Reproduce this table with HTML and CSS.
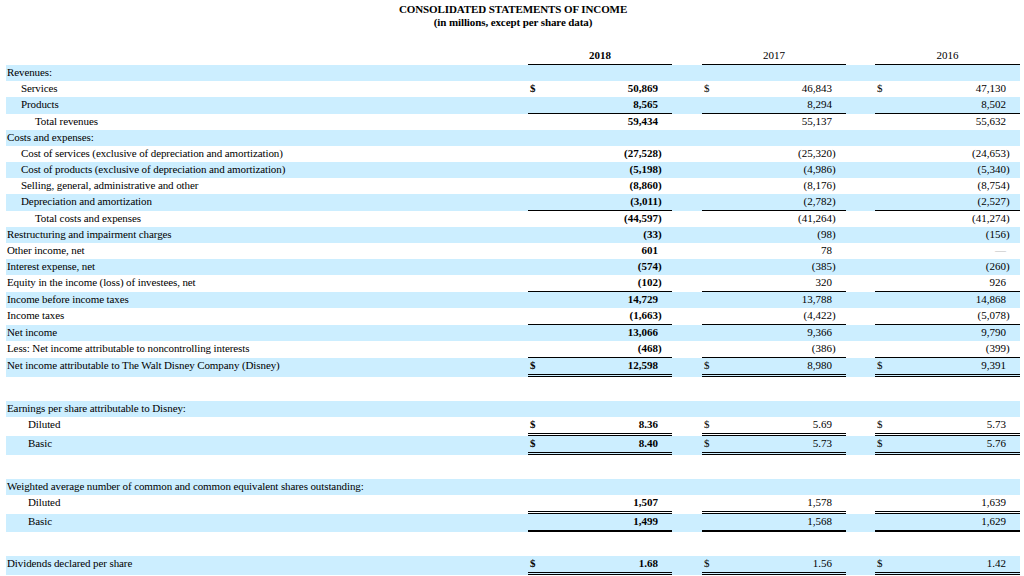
FILE: index.html
```html
<!DOCTYPE html>
<html lang="en">
<head>
<meta charset="utf-8">
<title>Consolidated Statements of Income</title>
<link rel="stylesheet" href="styles.css">
</head>
<body>
<div class="page">
  <div class="title">CONSOLIDATED STATEMENTS OF INCOME</div>
  <div class="subtitle">(in millions, except per share data)</div>
  <table class="fin">
    <colgroup>
      <col class="w-label">
      <col class="w-d"><col class="w-n"><col class="w-p">
      <col class="w-g1">
      <col class="w-d"><col class="w-n"><col class="w-p">
      <col class="w-g2">
      <col class="w-d"><col class="w-n3"><col class="w-p">
    </colgroup>
    <thead>
      <tr class="head">
        <th class="l"></th>
        <th colspan="3" class="yr bold">2018</th>
        <th class="g"></th>
        <th colspan="3" class="yr">2017</th>
        <th class="g"></th>
        <th colspan="3" class="yr">2016</th>
      </tr>
    </thead>
    <tbody>
      <tr class="b"><td class="l">Revenues:</td><td class="d"></td><td class="n"></td><td class="p"></td><td class="g"></td><td class="d"></td><td class="n"></td><td class="p"></td><td class="g"></td><td class="d"></td><td class="n"></td><td class="p"></td></tr>
      <tr><td class="l i1">Services</td><td class="d bold">$</td><td class="n bold">50,869</td><td class="p"></td><td class="g"></td><td class="d">$</td><td class="n">46,843</td><td class="p"></td><td class="g"></td><td class="d">$</td><td class="n">47,130</td><td class="p"></td></tr>
      <tr class="b ul"><td class="l i1">Products</td><td class="d"></td><td class="n bold">8,565</td><td class="p"></td><td class="g"></td><td class="d"></td><td class="n">8,294</td><td class="p"></td><td class="g"></td><td class="d"></td><td class="n">8,502</td><td class="p"></td></tr>
      <tr><td class="l i2">Total revenues</td><td class="d"></td><td class="n bold">59,434</td><td class="p"></td><td class="g"></td><td class="d"></td><td class="n">55,137</td><td class="p"></td><td class="g"></td><td class="d"></td><td class="n">55,632</td><td class="p"></td></tr>
      <tr class="b"><td class="l">Costs and expenses:</td><td class="d"></td><td class="n"></td><td class="p"></td><td class="g"></td><td class="d"></td><td class="n"></td><td class="p"></td><td class="g"></td><td class="d"></td><td class="n"></td><td class="p"></td></tr>
      <tr><td class="l i1">Cost of services (exclusive of depreciation and amortization)</td><td class="d"></td><td class="n bold">(27,528</td><td class="p bold">)</td><td class="g"></td><td class="d"></td><td class="n">(25,320</td><td class="p">)</td><td class="g"></td><td class="d"></td><td class="n">(24,653</td><td class="p">)</td></tr>
      <tr class="b"><td class="l i1">Cost of products (exclusive of depreciation and amortization)</td><td class="d"></td><td class="n bold">(5,198</td><td class="p bold">)</td><td class="g"></td><td class="d"></td><td class="n">(4,986</td><td class="p">)</td><td class="g"></td><td class="d"></td><td class="n">(5,340</td><td class="p">)</td></tr>
      <tr><td class="l i1">Selling, general, administrative and other</td><td class="d"></td><td class="n bold">(8,860</td><td class="p bold">)</td><td class="g"></td><td class="d"></td><td class="n">(8,176</td><td class="p">)</td><td class="g"></td><td class="d"></td><td class="n">(8,754</td><td class="p">)</td></tr>
      <tr class="b ul"><td class="l i1">Depreciation and amortization</td><td class="d"></td><td class="n bold">(3,011</td><td class="p bold">)</td><td class="g"></td><td class="d"></td><td class="n">(2,782</td><td class="p">)</td><td class="g"></td><td class="d"></td><td class="n">(2,527</td><td class="p">)</td></tr>
      <tr><td class="l i2">Total costs and expenses</td><td class="d"></td><td class="n bold">(44,597</td><td class="p bold">)</td><td class="g"></td><td class="d"></td><td class="n">(41,264</td><td class="p">)</td><td class="g"></td><td class="d"></td><td class="n">(41,274</td><td class="p">)</td></tr>
      <tr class="b"><td class="l">Restructuring and impairment charges</td><td class="d"></td><td class="n bold">(33</td><td class="p bold">)</td><td class="g"></td><td class="d"></td><td class="n">(98</td><td class="p">)</td><td class="g"></td><td class="d"></td><td class="n">(156</td><td class="p">)</td></tr>
      <tr><td class="l">Other income, net</td><td class="d"></td><td class="n bold">601</td><td class="p"></td><td class="g"></td><td class="d"></td><td class="n">78</td><td class="p"></td><td class="g"></td><td class="d"></td><td class="n dash">—</td><td class="p"></td></tr>
      <tr class="b"><td class="l">Interest expense, net</td><td class="d"></td><td class="n bold">(574</td><td class="p bold">)</td><td class="g"></td><td class="d"></td><td class="n">(385</td><td class="p">)</td><td class="g"></td><td class="d"></td><td class="n">(260</td><td class="p">)</td></tr>
      <tr class="ul"><td class="l">Equity in the income (loss) of investees, net</td><td class="d"></td><td class="n bold">(102</td><td class="p bold">)</td><td class="g"></td><td class="d"></td><td class="n">320</td><td class="p"></td><td class="g"></td><td class="d"></td><td class="n">926</td><td class="p"></td></tr>
      <tr class="b"><td class="l">Income before income taxes</td><td class="d"></td><td class="n bold">14,729</td><td class="p"></td><td class="g"></td><td class="d"></td><td class="n">13,788</td><td class="p"></td><td class="g"></td><td class="d"></td><td class="n">14,868</td><td class="p"></td></tr>
      <tr class="ul"><td class="l">Income taxes</td><td class="d"></td><td class="n bold">(1,663</td><td class="p bold">)</td><td class="g"></td><td class="d"></td><td class="n">(4,422</td><td class="p">)</td><td class="g"></td><td class="d"></td><td class="n">(5,078</td><td class="p">)</td></tr>
      <tr class="b"><td class="l">Net income</td><td class="d"></td><td class="n bold">13,066</td><td class="p"></td><td class="g"></td><td class="d"></td><td class="n">9,366</td><td class="p"></td><td class="g"></td><td class="d"></td><td class="n">9,790</td><td class="p"></td></tr>
      <tr class="ul"><td class="l">Less: Net income attributable to noncontrolling interests</td><td class="d"></td><td class="n bold">(468</td><td class="p bold">)</td><td class="g"></td><td class="d"></td><td class="n">(386</td><td class="p">)</td><td class="g"></td><td class="d"></td><td class="n">(399</td><td class="p">)</td></tr>
      <tr class="b dbl"><td class="l">Net income attributable to The Walt Disney Company (Disney)</td><td class="d bold">$</td><td class="n bold">12,598</td><td class="p"></td><td class="g"></td><td class="d">$</td><td class="n">8,980</td><td class="p"></td><td class="g"></td><td class="d">$</td><td class="n">9,391</td><td class="p"></td></tr>
      <tr class="spacer"><td colspan="12"></td></tr>
      <tr class="b"><td class="l">Earnings per share attributable to Disney:</td><td class="d"></td><td class="n"></td><td class="p"></td><td class="g"></td><td class="d"></td><td class="n"></td><td class="p"></td><td class="g"></td><td class="d"></td><td class="n"></td><td class="p"></td></tr>
      <tr class="dbl"><td class="l i3">Diluted</td><td class="d bold">$</td><td class="n bold">8.36</td><td class="p"></td><td class="g"></td><td class="d">$</td><td class="n">5.69</td><td class="p"></td><td class="g"></td><td class="d">$</td><td class="n">5.73</td><td class="p"></td></tr>
      <tr class="b dbl"><td class="l i3">Basic</td><td class="d bold">$</td><td class="n bold">8.40</td><td class="p"></td><td class="g"></td><td class="d">$</td><td class="n">5.73</td><td class="p"></td><td class="g"></td><td class="d">$</td><td class="n">5.76</td><td class="p"></td></tr>
      <tr class="spacer"><td colspan="12"></td></tr>
      <tr class="b"><td class="l">Weighted average number of common and common equivalent shares outstanding:</td><td class="d"></td><td class="n"></td><td class="p"></td><td class="g"></td><td class="d"></td><td class="n"></td><td class="p"></td><td class="g"></td><td class="d"></td><td class="n"></td><td class="p"></td></tr>
      <tr class="dbl"><td class="l i3">Diluted</td><td class="d"></td><td class="n bold">1,507</td><td class="p"></td><td class="g"></td><td class="d"></td><td class="n">1,578</td><td class="p"></td><td class="g"></td><td class="d"></td><td class="n">1,639</td><td class="p"></td></tr>
      <tr class="b thick"><td class="l i3">Basic</td><td class="d"></td><td class="n bold">1,499</td><td class="p"></td><td class="g"></td><td class="d"></td><td class="n">1,568</td><td class="p"></td><td class="g"></td><td class="d"></td><td class="n">1,629</td><td class="p"></td></tr>
      <tr class="spacer"><td colspan="12"></td></tr>
      <tr class="b dbl"><td class="l">Dividends declared per share</td><td class="d bold">$</td><td class="n bold">1.68</td><td class="p"></td><td class="g"></td><td class="d">$</td><td class="n">1.56</td><td class="p"></td><td class="g"></td><td class="d">$</td><td class="n">1.42</td><td class="p"></td></tr>
    </tbody>
  </table>
</div>
</body>
</html>
```

FILE: styles.css
```css
html, body {
  margin: 0;
  padding: 0;
  background: #ffffff;
}

body {
  font-family: "Liberation Serif", "Times New Roman", serif;
  font-size: 11px;
  color: #000000;
}

.page {
  width: 1014px;
  padding: 3px 4px 0 6px;
}

.title,
.subtitle {
  text-align: center;
  font-weight: bold;
  font-size: 11px;
  line-height: 13px;
  letter-spacing: -0.1px;
}

.subtitle {
  margin-bottom: 19px;
}

.fin {
  width: 1014px;
  table-layout: fixed;
  border-collapse: separate;
  border-spacing: 0;
}

.w-label { width: 522px; }
.w-d { width: 12px; }
.w-n { width: 118px; }
.w-n3 { width: 119px; }
.w-p { width: 14px; }
.w-g1 { width: 30px; }
.w-g2 { width: 29px; }

.fin th,
.fin td {
  height: 16px;
  padding: 0 0 2px 0;
  box-sizing: border-box;
  line-height: 14px;
  white-space: nowrap;
  vertical-align: top;
}

.fin th {
  font-weight: normal;
}

.head .yr {
  text-align: center;
  border-bottom: 1px solid #000;
}

.bold {
  font-weight: bold !important;
}

.fin tr.b {
  background: #cceeff;
}

.l {
  text-align: left;
  padding-left: 1px !important;
  overflow: hidden;
  letter-spacing: -0.1px;
}

.l.i1 { padding-left: 15px !important; }
.l.i2 { padding-left: 29px !important; }
.l.i3 { padding-left: 22px !important; }

.d {
  text-align: left;
  padding-left: 2px !important;
}

.n {
  text-align: right;
}

.p {
  text-align: left;
}

.dash {
  color: #bdbdbd;
}

.fin tr.ul td.d,
.fin tr.ul td.n,
.fin tr.ul td.p {
  border-bottom: 1px solid #000;
}

.fin tr.dbl td.d,
.fin tr.dbl td.n,
.fin tr.dbl td.p {
  border-bottom: 3px double #000;
}

.fin tr.thick td.d,
.fin tr.thick td.n,
.fin tr.thick td.p {
  border-bottom: 2px solid #000;
}

.fin tr.spacer td {
  height: 24px;
  padding: 0;
}
```
